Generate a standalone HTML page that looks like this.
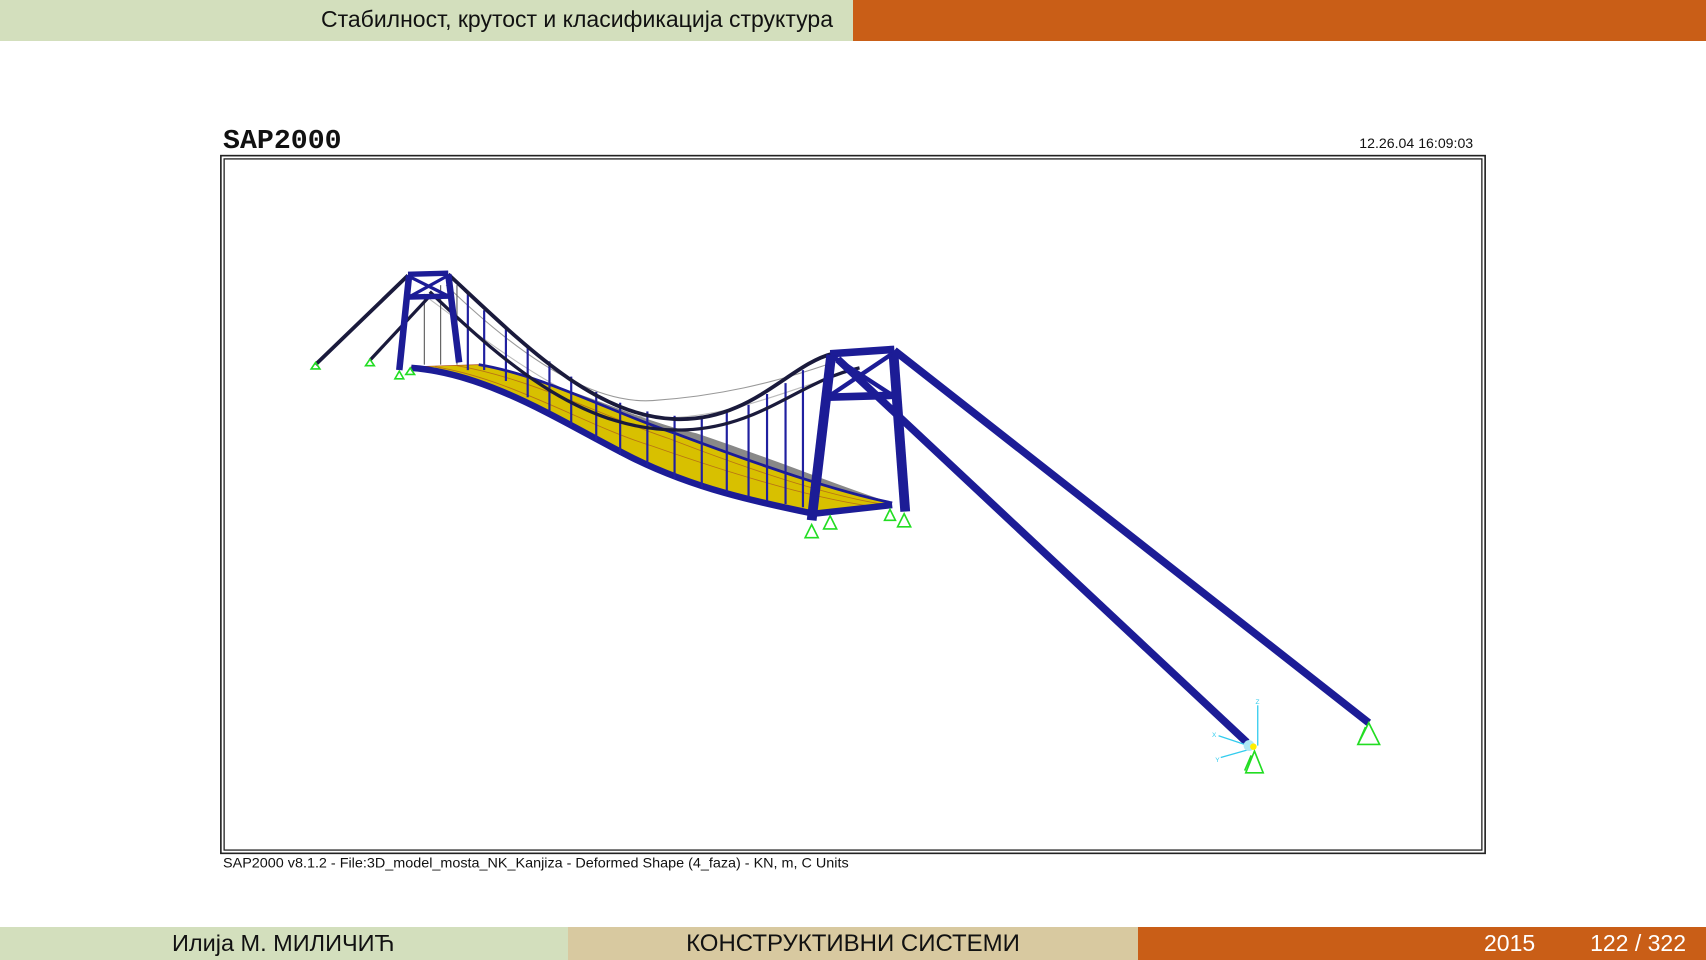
<!DOCTYPE html>
<html><head><meta charset="utf-8"><style>
html,body{margin:0;padding:0;}
body{width:1706px;height:960px;position:relative;overflow:hidden;background:#fff;font-family:"Liberation Sans",sans-serif;}
.hd{position:absolute;top:0;height:41px;}
.ft{position:absolute;top:927px;height:33px;font-size:23px;line-height:33px;color:#111;}
</style></head><body>
<div class="hd" style="left:0;width:853px;background:#d3dfbd;"></div>
<div class="hd" style="left:853px;width:853px;background:#c95e17;"></div>
<div style="position:absolute;right:873px;top:0;height:38px;line-height:38px;font-size:23px;color:#111;white-space:nowrap;">Стабилност, крутост и класификација структура</div>

<div class="ft" style="left:0;width:568px;background:#d3dfbd;"><span style="position:absolute;left:172px;font-size:23.5px;">Илија М. МИЛИЧИЋ</span></div>
<div class="ft" style="left:568px;width:570px;background:#d8c9a0;text-align:center;font-size:24px;">КОНСТРУКТИВНИ СИСТЕМИ</div>
<div class="ft" style="left:1138px;width:568px;background:#c95e17;color:#fff;"><span style="position:absolute;left:346px;">2015</span><span style="position:absolute;right:20px;">122 / 322</span></div>

<svg style="position:absolute;left:0;top:0" width="1706" height="960" viewBox="0 0 1568 882" preserveAspectRatio="none">
<text x="205" y="136" font-family="Liberation Mono,monospace" font-weight="bold" font-size="25" textLength="109" lengthAdjust="spacingAndGlyphs" fill="#111">SAP2000</text>
<text x="1354" y="136" text-anchor="end" font-family="Liberation Sans,sans-serif" font-size="13" fill="#111">12.26.04 16:09:03</text>
<rect x="203" y="143" width="1162" height="641" fill="none" stroke="#222" stroke-width="1.5"/>
<rect x="206" y="146" width="1156" height="635" fill="none" stroke="#222" stroke-width="1.2"/>
<text x="205" y="797" font-family="Liberation Sans,sans-serif" font-size="13" textLength="575" lengthAdjust="spacingAndGlyphs" fill="#111">SAP2000 v8.1.2 - File:3D_model_mosta_NK_Kanjiza - Deformed Shape (4_faza) - KN, m, C Units</text>

<path d="M410,262 C470,320 540,372 600,368 C660,364 710,352 760,335" fill="none" stroke="#999" stroke-width="1"/>
<path d="M395,275 C470,330 540,385 610,384 C670,383 720,360 770,345" fill="none" stroke="#bbb" stroke-width="1"/>
<path d="M440,338 C520,350 580,385 640,398 C720,425 780,450 820,462 L800,462 C740,440 680,420 620,408 C560,395 500,360 440,340Z" fill="#888"/>
<path d="M378,337 L440,335 C500,345 560,378 620,398 C700,428 770,452 820,462 L748,472 C700,462 640,450 580,420 C520,390 450,343 378,338Z" fill="#d8c000" stroke="#b05020" stroke-width="0.6"/>
<g stroke="#b0601a" stroke-width="0.8" fill="none" opacity="0.8">
<path d="M400,337 C470,348 540,392 600,410 C680,438 750,458 800,465"/>
<path d="M420,336 C490,348 560,385 615,403 C690,432 760,455 810,463"/>
</g>
<path d="M378,338 C450,343 520,390 580,420 C640,450 700,462 748,472 L820,464" fill="none" stroke="#1c1c96" stroke-width="6"/>
<path d="M440,335 C500,345 560,378 620,398 C700,428 770,452 820,462" fill="none" stroke="#1c1c96" stroke-width="2.5"/>
<g stroke="#2020a0" stroke-width="2">
<path d="M430,270 V340"/><path d="M445,285 V340"/><path d="M465,300 V350"/><path d="M485,318 V365"/><path d="M505,332 V378"/><path d="M525,346 V392"/><path d="M548,360 V405"/><path d="M570,370 V418"/><path d="M595,378 V428"/><path d="M620,382 V440"/><path d="M645,382 V448"/><path d="M668,378 V452"/><path d="M688,372 V457"/><path d="M705,362 V460"/><path d="M722,352 V463"/><path d="M738,340 V466"/>
</g>
<g stroke="#555" stroke-width="1"><path d="M390,270 V335"/><path d="M405,262 V335"/><path d="M420,262 V335"/></g>
<path d="M412,252 C480,315 545,382 620,385 C690,388 725,335 765,325" fill="none" stroke="#1a1a3c" stroke-width="3.5"/>
<path d="M395,268 C470,340 540,398 630,395 C700,392 735,350 790,338" fill="none" stroke="#1a1a3c" stroke-width="3"/>
<path d="M290,335 L375,253" stroke="#1a1a3c" stroke-width="3.5"/>
<path d="M340,331 L395,272" stroke="#1a1a3c" stroke-width="3"/>
<g stroke="#1c1c96" fill="none">
<path d="M375,252 L412,251" stroke-width="5"/>
<path d="M376,253 L367,340" stroke-width="6"/>
<path d="M412,252 L422,333" stroke-width="6"/>
<path d="M372,273 L416,272" stroke-width="5"/>
<path d="M376,254 L414,273 M412,253 L374,274" stroke-width="3"/>
</g>
<path d="M822,322 L1258,664" stroke="#1c1c96" stroke-width="7"/>
<path d="M770,330 L1146,682" stroke="#1c1c96" stroke-width="7"/>
<g stroke="#1c1c96" fill="none">
<path d="M763,325 L822,321" stroke-width="7"/>
<path d="M764,326 L746,478" stroke-width="9"/>
<path d="M821,322 L832,470" stroke-width="9"/>
<path d="M757,365 L827,363" stroke-width="7"/>
<path d="M766,328 L820,363 M820,325 L762,364" stroke-width="4"/>
</g>
<g stroke="#22dd22" stroke-width="1.5" fill="none">
<path d="M290,333 l-4,6 h8z"/><path d="M340,330 l-4,6 h8z"/><path d="M367,341 l-4,7 h8z"/><path d="M377,338 l-4,6 h8z"/>
<path d="M746,482 l-6,12 h12z"/><path d="M763,474 l-6,12 h12z"/><path d="M818,468 l-5,10 h10z"/><path d="M831,472 l-6,12 h12z"/>
<path d="M1153,690 l-8,20 h16z M1150,694 l-6,14"/>
<path d="M1258,664 l-10,20 h20z M1255,668 l-7,16"/>
</g>
<g stroke="#33ccee" stroke-width="1.2" fill="#33ccee" font-size="6" font-family="Liberation Sans,sans-serif">
<path d="M1156,685 V648"/><path d="M1150,686 L1120,676"/><path d="M1150,688 L1122,696"/>
<text x="1154" y="647" stroke="none">Z</text><text x="1114" y="677" stroke="none">X</text><text x="1117" y="700" stroke="none">Y</text>
</g>
<circle cx="1148" cy="685" r="5" fill="#aee8f5"/>
<circle cx="1152" cy="686" r="3" fill="#ffee00"/>
</svg>
</body></html>
